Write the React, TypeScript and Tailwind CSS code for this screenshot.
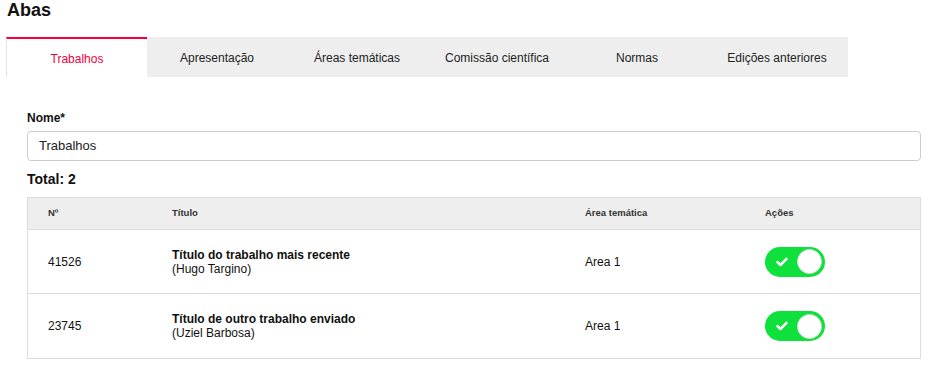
import React from "react";

const tabs = ["Trabalhos", "Apresentação", "Áreas temáticas", "Comissão científica", "Normas", "Edições anteriores"];

const rows = [
  { n: "41526", title: "Título do trabalho mais recente", author: "(Hugo Targino)", area: "Area 1" },
  { n: "23745", title: "Título de outro trabalho enviado", author: "(Uziel Barbosa)", area: "Area 1" },
];

function Toggle() {
  return (
    <div className="flex items-center w-[60px] h-[30px] rounded-full bg-[#0ee03c] pl-[11px] pr-[3px] justify-between">
      <svg width="12" height="10" viewBox="0 0 12 10">
        <path d="M1.5 5.2 L4.5 8 L10.5 1.8" fill="none" stroke="#fff" strokeWidth="2.6" strokeLinecap="round" strokeLinejoin="round" />
      </svg>
      <div className="w-[25px] h-[25px] rounded-full bg-white border border-[#d8d8d8]" />
    </div>
  );
}

export default function App() {
  return (
    <div className="w-[934px] h-[387px] bg-white text-[#111] overflow-hidden" style={{ fontFamily: '"Liberation Sans", Arial, sans-serif' }}>
      <h1 className="pl-[7px] pt-[0px] text-[18px] leading-[20px] font-bold">Abas</h1>
      <div className="ml-[6px] mt-[17px] flex w-[842px] bg-[#eeeeee] h-[40px]">
        {tabs.map((t, i) =>
          i === 0 ? (
            <div key={t} className="w-[141px] bg-white border-t-2 border-[#f5003d] border-l border-l-[#e3e3e3] flex items-center justify-center text-[12px] text-[#f5003d] pt-[2px] h-[40px]">
              {t}
            </div>
          ) : (
            <div key={t} className="w-[140px] flex items-center justify-center text-[12px] text-[#222] pt-[2px]">
              {t}
            </div>
          )
        )}
      </div>
      <div className="px-[27px] pr-[13px]">
        <div className="mt-[34px] text-[12px] leading-[14px] font-bold">Nome*</div>
        <div className="mt-[6px] h-[30px] border border-[#cccccc] rounded-[4px] flex items-center pl-[11px] text-[13px] text-[#222]">Trabalhos</div>
        <div className="mt-[10px] text-[14px] leading-[16px] font-bold">Total: 2</div>
        <div className="mt-[10px] border border-[#dddddd]">
          <div className="grid grid-cols-[124px_413px_180px_1fr] h-[32px] items-center bg-[#eeeeee] border-b border-[#dddddd] text-[9.5px] font-bold text-[#333]">
            <div className="pl-[20px]">Nº</div>
            <div className="pl-[20px]">Título</div>
            <div className="pl-[20px]">Área temática</div>
            <div className="pl-[20px]">Ações</div>
          </div>
          {rows.map((r, i) => (
            <div key={r.n} className={`grid grid-cols-[124px_413px_180px_1fr] h-[64px] items-center text-[12px] text-[#111] ${i === 0 ? "border-b border-[#dddddd]" : ""}`}>
              <div className="pl-[20px]">{r.n}</div>
              <div className="pl-[20px] leading-[14px]">
                <div className="font-bold">{r.title}</div>
                <div>{r.author}</div>
              </div>
              <div className="pl-[20px]">{r.area}</div>
              <div className="pl-[20px]">
                <Toggle />
              </div>
            </div>
          ))}
        </div>
      </div>
    </div>
  );
}
